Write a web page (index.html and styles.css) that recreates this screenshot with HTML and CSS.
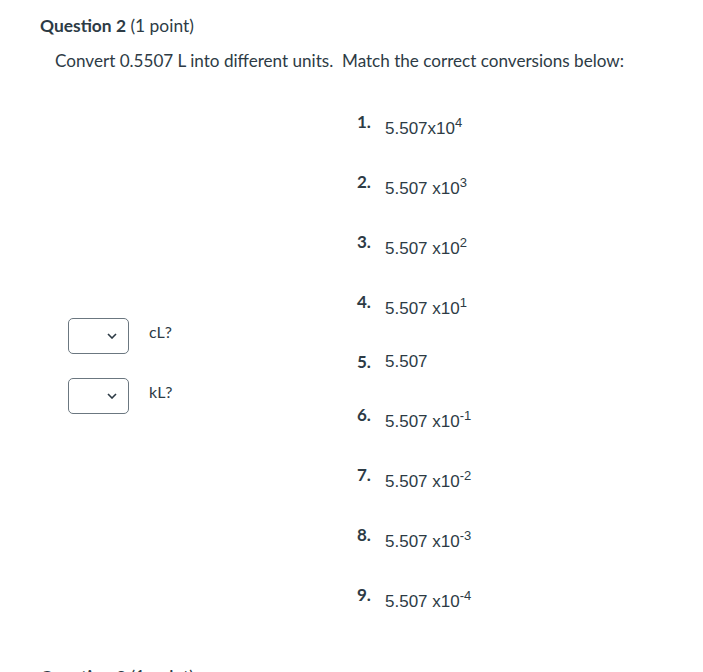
FILE: index.html
```html
<!DOCTYPE html>
<html>
<head>
<meta charset="utf-8">
<link rel="stylesheet" href="styles.css">
</head>
<body>
<div class="question">
  <h2 class="q-title"><strong>Question 2</strong> (1 point)</h2>
  <p class="q-text">Convert 0.5507 L into different units.&nbsp; Match the correct conversions below:</p>
  <div class="match">
    <div class="pairs">
      <div class="pair">
        <div class="select"><svg class="chev" width="10" height="6" viewBox="0 0 10 6"><polyline points="1,1 5,5 9,1" fill="none" stroke="#2d3b45" stroke-width="1.6"/></svg></div>
        <span class="label">cL?</span>
      </div>
      <div class="pair">
        <div class="select"><svg class="chev" width="10" height="6" viewBox="0 0 10 6"><polyline points="1,1 5,5 9,1" fill="none" stroke="#2d3b45" stroke-width="1.6"/></svg></div>
        <span class="label">kL?</span>
      </div>
    </div>
    <ol class="answers">
      <li class="ans"><span class="num">1.</span><span class="val sup-row">5.507x10<sup>4</sup></span></li>
      <li class="ans"><span class="num">2.</span><span class="val sup-row">5.507 x10<sup>3</sup></span></li>
      <li class="ans"><span class="num">3.</span><span class="val sup-row">5.507 x10<sup>2</sup></span></li>
      <li class="ans"><span class="num">4.</span><span class="val sup-row">5.507 x10<sup>1</sup></span></li>
      <li class="ans"><span class="num">5.</span><span class="val">5.507</span></li>
      <li class="ans"><span class="num">6.</span><span class="val sup-row">5.507 x10<sup>-1</sup></span></li>
      <li class="ans"><span class="num">7.</span><span class="val sup-row">5.507 x10<sup>-2</sup></span></li>
      <li class="ans"><span class="num">8.</span><span class="val sup-row">5.507 x10<sup>-3</sup></span></li>
      <li class="ans"><span class="num">9.</span><span class="val sup-row">5.507 x10<sup>-4</sup></span></li>
    </ol>
  </div>
</div>
<div class="question next">
  <h2 class="q-title"><strong>Question 3</strong> (1 point)</h2>
</div>
</body>
</html>
```
FILE: styles.css
```css
html, body {
  margin: 0;
  padding: 0;
  background: #ffffff;
}
body {
  font-family: Lato, "Open Sans", sans-serif;
  color: #2d3b45;
}
.question {
  padding-left: 40px;
}
.q-title {
  margin: 14px 0 0 0;
  font-size: 17.4px;
  line-height: 24px;
  font-weight: 400;
}
.q-title strong {
  font-weight: 700;
}
.next .q-title {
  margin-top: 20px;
}
.q-text {
  margin: 11px 0 0 15px;
  font-size: 17.1px;
  line-height: 24px;
}
.match {
  display: flex;
  margin-top: 39px;
  padding-left: 28px;
}
.pairs {
  width: 289px;
  padding-top: 206px;
  display: flex;
  flex-direction: column;
  gap: 24px;
}
.pair {
  display: flex;
  align-items: flex-start;
  gap: 20px;
}
.select {
  box-sizing: border-box;
  width: 61px;
  height: 36px;
  border: 1px solid #6b7780;
  border-radius: 5px;
  display: flex;
  align-items: center;
  justify-content: flex-end;
  padding-right: 11px;
}
.label {
  margin-top: 2px;
  font-size: 16px;
  line-height: 24px;
}
.answers {
  list-style: none;
  margin: 0;
  padding: 0;
}
.ans {
  display: flex;
  align-items: flex-start;
  margin-bottom: 33px;
}
.num {
  width: 28px;
  font-weight: 700;
  font-size: 17px;
  line-height: 20px;
}
.val {
  font-family: "Liberation Sans", Arial, sans-serif;
  font-size: 17px;
  line-height: 20px;
}
.sup-row {
  padding-top: 7px;
}
.val sup {
  font-size: 13px;
  line-height: 0;
}
```
